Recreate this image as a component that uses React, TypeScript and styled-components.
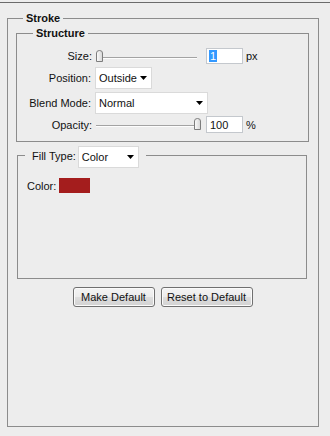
import React from "react";
import styled, { createGlobalStyle } from "styled-components";

const GlobalStyle = createGlobalStyle`
  body {
    margin: 0;
    background: #ededed;
    font-family: "Liberation Sans", Arial, sans-serif;
    font-size: 11px;
    color: #111;
  }
`;

const Page = styled.div`
  width: 330px;
  height: 436px;
  overflow: hidden;
`;

const TopRule = styled.div`
  height: 2px;
  border-bottom: 1px solid #6b6b6b;
`;

const Group = styled.fieldset<{ $width: number; $top: number; $left: number; $pad: string }>`
  box-sizing: border-box;
  width: ${(p) => p.$width}px;
  min-inline-size: 0;
  margin: ${(p) => p.$top}px 0 0 ${(p) => p.$left}px;
  padding: ${(p) => p.$pad};
  border: 1px solid #8c8c8c;
`;

const Title = styled.legend<{ $offset: number }>`
  margin-left: ${(p) => p.$offset}px;
  padding: 0 3px;
  font-weight: bold;
  line-height: 13px;
  color: #111;
`;

const FillLegend = styled.legend`
  display: flex;
  align-items: flex-start;
  margin-left: 7px;
  padding: 0 7px;
  height: 18px;
`;

const Row = styled.div<{ $cols: string; $h: number; $top: number }>`
  display: grid;
  grid-template-columns: ${(p) => p.$cols};
  align-items: center;
  height: ${(p) => p.$h}px;
  margin-top: ${(p) => p.$top}px;
`;

const Label = styled.span`
  text-align: right;
  padding-right: 4px;
  white-space: nowrap;
`;

const SliderBox = styled.div<{ $width: number }>`
  position: relative;
  align-self: start;
  width: ${(p) => p.$width}px;
  height: 15px;
`;

const Track = styled.div`
  position: absolute;
  left: 0;
  right: 0;
  top: 9px;
  height: 1px;
  background: #a3a3a3;
  border-bottom: 1px solid #fdfdfd;
`;

const Thumb = styled.svg`
  position: absolute;
  top: 2px;
`;

const TextBox = styled.div<{ $h: number }>`
  box-sizing: border-box;
  width: 37px;
  height: ${(p) => p.$h}px;
  background: #fff;
  border: 1px solid #c4c8cd;
  padding-left: 3px;
  display: flex;
  align-items: center;
  line-height: 12px;
`;

const Selected = styled.span`
  display: inline-block;
  margin-left: -1px;
  padding: 0 1px;
  height: 12px;
  background: #3399ff;
  color: #fff;
`;

const Unit = styled.span`
  padding-left: 3px;
`;

const Select = styled.div<{ $width: number }>`
  box-sizing: border-box;
  flex: none;
  width: ${(p) => p.$width}px;
  height: 22px;
  display: flex;
  align-items: center;
  justify-content: space-between;
  padding: 0 4px 0 3px;
  background: #fff;
  border: 1px solid #dadada;
`;

const FillLabel = styled.span`
  margin-right: 2px;
  line-height: 20px;
`;

const ColorRow = styled.div`
  display: flex;
  align-items: center;
  gap: 3px;
  margin-top: 14px;
  padding-left: 9px;
  height: 15px;
`;

const Swatch = styled.div<{ $color: string }>`
  width: 31px;
  height: 15px;
  background: ${(p) => p.$color};
`;

const Buttons = styled.div`
  display: flex;
  justify-content: center;
  gap: 6px;
  margin-top: 8px;
`;

const Button = styled.button<{ $width: number }>`
  box-sizing: border-box;
  width: ${(p) => p.$width}px;
  height: 20px;
  padding: 0;
  font-family: inherit;
  font-size: 11px;
  color: #111;
  border: 1px solid #707070;
  border-radius: 3px;
  background: linear-gradient(#f4f4f4, #ececec 48%, #dedede 52%, #d2d2d2);
  box-shadow: inset 0 0 0 1px #fbfbfb;
`;

const Arrow = () => (
  <svg width="7" height="4" viewBox="0 0 7 4">
    <polygon points="0,0 7,0 3.5,4" fill="#000" />
  </svg>
);

const Slider = ({ width, value }: { width: number; value: number }) => (
  <SliderBox $width={width}>
    <Track />
    <Thumb width="7" height="12" viewBox="0 0 7 12" style={{ left: value * (width - 7) }}>
      <defs>
        <linearGradient id="tg" x1="0" x2="1">
          <stop offset="0" stopColor="#fdfdfd" />
          <stop offset="1" stopColor="#d6d6d6" />
        </linearGradient>
      </defs>
      <path d="M0.5 11.5 V3 Q0.5 0.5 3.5 0.5 Q6.5 0.5 6.5 3 V11.5 Z" fill="url(#tg)" stroke="#7d7d7d" />
    </Thumb>
  </SliderBox>
);

const sliderCols = "79px 110px 37px auto";
const selectCols = "78px auto";

export default function App() {
  return (
    <Page>
      <GlobalStyle />
      <TopRule />
      <Group $width={312} $top={9} $left={7} $pad="0 9px 119px 8px">
        <Title $offset={7}>Stroke</Title>
        <Group $width={293} $top={2} $left={0} $pad="0 0 8px 0">
          <Title $offset={16}>Structure</Title>
          <Row $cols={sliderCols} $h={16} $top={8}>
            <Label>Size:</Label>
            <Slider width={101} value={0} />
            <TextBox $h={16}>
              <Selected>1</Selected>
            </TextBox>
            <Unit>px</Unit>
          </Row>
          <Row $cols={selectCols} $h={22} $top={3}>
            <Label>Position:</Label>
            <Select $width={57}>
              Outside <Arrow />
            </Select>
          </Row>
          <Row $cols={selectCols} $h={22} $top={3}>
            <Label>Blend Mode:</Label>
            <Select $width={113}>
              Normal <Arrow />
            </Select>
          </Row>
          <Row $cols={sliderCols} $h={17} $top={2}>
            <Label>Opacity:</Label>
            <Slider width={105} value={1} />
            <TextBox $h={17}>100</TextBox>
            <Unit>%</Unit>
          </Row>
        </Group>
        <Group $width={290} $top={4} $left={1} $pad="0 0 85px 0">
          <FillLegend>
            <FillLabel>Fill Type:</FillLabel>
            <Select $width={61}>
              Color <Arrow />
            </Select>
          </FillLegend>
          <ColorRow>
            <span>Color:</span>
            <Swatch $color="#a41d1d" />
          </ColorRow>
        </Group>
        <Buttons>
          <Button $width={82}>Make Default</Button>
          <Button $width={92}>Reset to Default</Button>
        </Buttons>
      </Group>
    </Page>
  );
}
